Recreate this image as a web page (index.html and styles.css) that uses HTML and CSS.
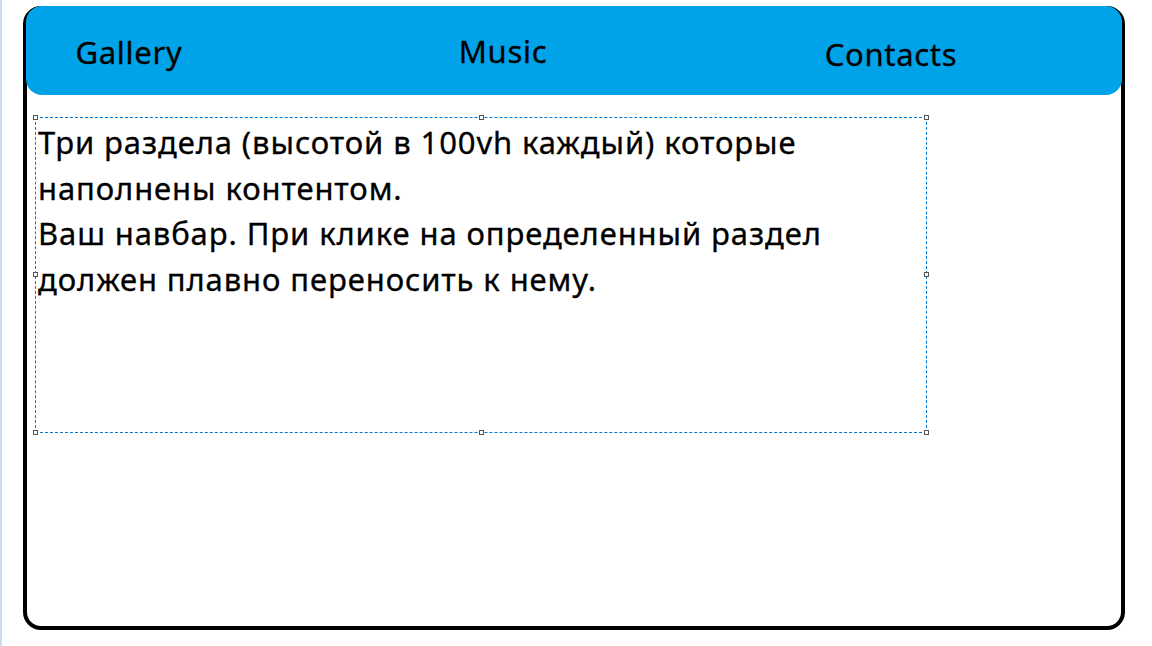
FILE: index.html
```html
<!DOCTYPE html>
<html lang="ru">
<head>
<meta charset="utf-8">
<title>Navbar</title>
<link rel="stylesheet" href="styles.css">
</head>
<body>
<div class="page">
  <div class="edge"></div>
  <div class="frame">
    <nav class="navbar">
      <a class="nav-item nav-gallery" href="#gallery">Gallery</a>
      <a class="nav-item nav-music" href="#music">Music</a>
      <a class="nav-item nav-contacts" href="#contacts">Contacts</a>
    </nav>
    <div class="textbox">
      <p class="task">Три раздела (высотой в 100vh каждый) которые<br>наполнены контентом.<br>Ваш навбар. При клике на определенный раздел<br>должен плавно переносить к нему.</p>
      <span class="handle h-tl"></span>
      <span class="handle h-tc"></span>
      <span class="handle h-tr"></span>
      <span class="handle h-ml"></span>
      <span class="handle h-mr"></span>
      <span class="handle h-bl"></span>
      <span class="handle h-bc"></span>
      <span class="handle h-br"></span>
    </div>
  </div>
</div>
</body>
</html>
```
FILE: styles.css
```css
html, body {
  margin: 0;
  padding: 0;
  background: #ffffff;
}
body {
  width: 1152px;
  height: 646px;
  overflow: hidden;
  font-family: "Noto Sans", "Open Sans", sans-serif;
}
.page {
  display: flex;
  height: 646px;
}
.edge {
  width: 2px;
  flex: 0 0 2px;
  background: #cddcee;
}
.frame {
  box-sizing: border-box;
  margin: 6px 0 0 21px;
  width: 1102px;
  height: 624px;
  border: 4px solid #000000;
  border-radius: 18px;
  display: flex;
  flex-direction: column;
}
.navbar {
  margin: -4px -1px 0 -1px;
  height: 89px;
  background: #00a2e8;
  border-radius: 16px;
  display: grid;
  grid-template-columns: 206px 542px 234px;
  align-items: center;
}
.nav-item {
  color: #000000;
  text-decoration: none;
  font-size: 31px;
  letter-spacing: 0.7px;
  text-align: center;
  line-height: 36px;
  -webkit-text-stroke: 0.3px #000000;
}
.nav-gallery { padding-top: 2px; }
.nav-music { padding-bottom: 0; }
.nav-contacts { padding-top: 6px; }
.textbox {
  position: relative;
  box-sizing: border-box;
  margin: 22px 0 0 8px;
  width: 892px;
  height: 316px;
  border: 1px dashed #0078d7;
}
.task {
  margin: 0;
  padding: 2px 0 0 2px;
  font-size: 31px;
  letter-spacing: 0.9px;
  line-height: 45.5px;
  color: #000000;
  -webkit-text-stroke: 0.3px #000000;
}
.handle {
  position: absolute;
  width: 3px;
  height: 3px;
  border: 1px solid #555555;
  background: #ffffff;
}
.h-tl { left: -3px; top: -3px; }
.h-tc { left: 443px; top: -3px; }
.h-tr { right: -3px; top: -3px; }
.h-ml { left: -3px; top: 154px; }
.h-mr { right: -3px; top: 154px; }
.h-bl { left: -3px; bottom: -3px; }
.h-bc { left: 443px; bottom: -3px; }
.h-br { right: -3px; bottom: -3px; }
```
